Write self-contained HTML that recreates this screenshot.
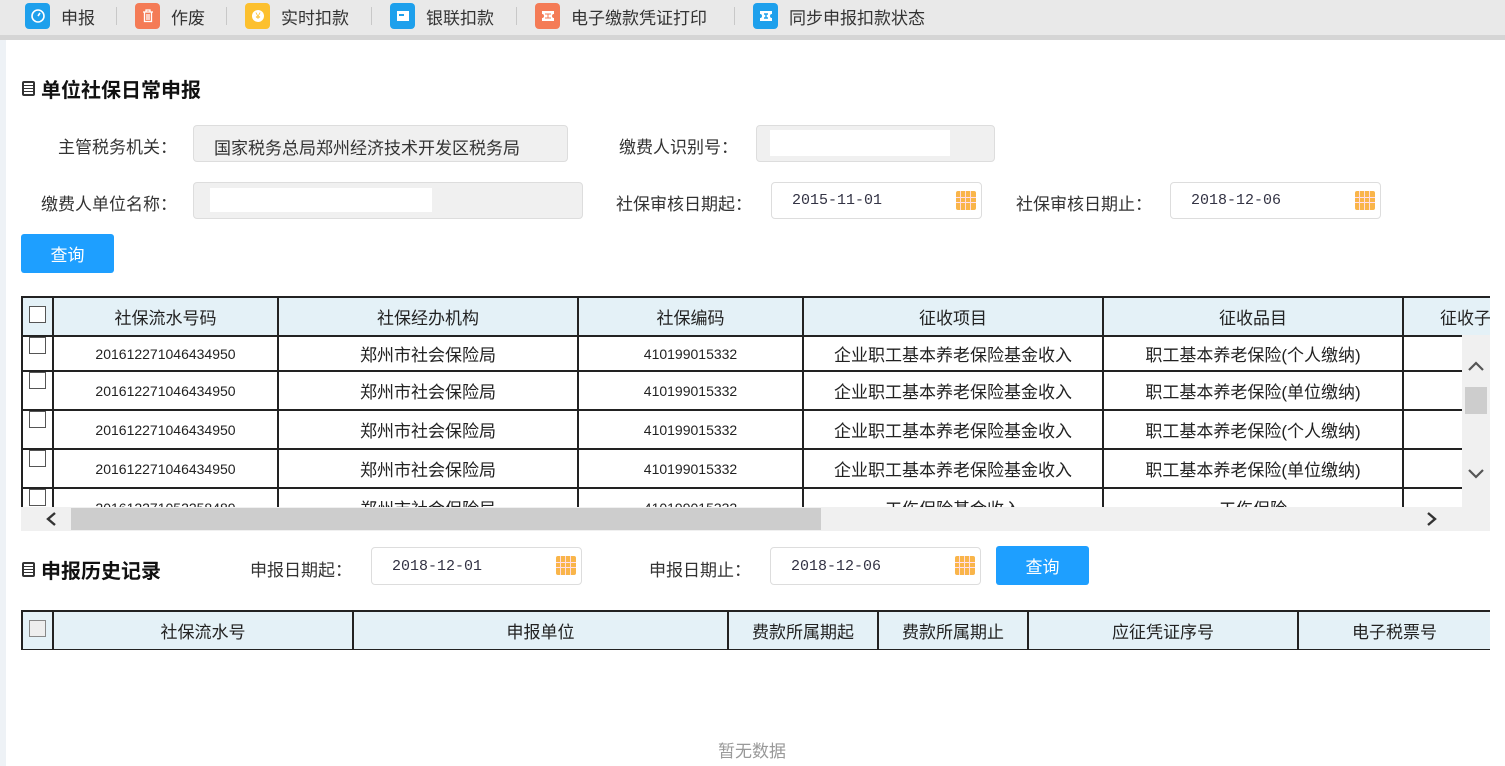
<!DOCTYPE html>
<html><head><meta charset="utf-8"><style>
*{box-sizing:border-box;margin:0;padding:0}
body{width:1505px;height:766px;overflow:hidden;background:#fff;font-family:"Liberation Sans","Noto Sans CJK SC",sans-serif;color:#333;position:relative}
.a{position:absolute}
.tb{left:0;top:0;width:1505px;height:35px;background:#e9e9e9}
.tb2{left:0;top:35px;width:1505px;height:5px;background:#d5d5d5}
.ti{position:absolute;top:3px;height:26px;display:flex;align-items:center;font-size:17px;color:#333}
.ic{width:25px;height:26px;border-radius:4px;margin-right:11px;display:flex;align-items:center;justify-content:center}
.sep{position:absolute;top:7px;width:1px;height:18px;background:#c8c8c8}
.lstrip{left:0;top:40px;width:6px;height:726px;background:#eef2f6}
.h{font-size:20px;font-weight:bold;color:#111;display:flex;align-items:center}
.hi{width:13px;height:15px;border:2px solid #333;border-radius:2px;margin-right:6px;background:repeating-linear-gradient(#fff 0 2px,#333 2px 3px)}
.lb{font-size:17px;color:#333;text-align:right}
.in{border:1px solid #ddd;border-radius:4px;background:#f0f0f0}
.dt{border:1px solid #ddd;border-radius:4px;background:#fff;font-family:"Liberation Mono",monospace;font-size:15px;color:#334;padding-left:20px;display:flex;align-items:center}
.cal{position:absolute;right:5px;top:8px;width:20px;height:19px;border-radius:2px;background:#f9b54a;background-image:linear-gradient(90deg,transparent 4px,#fdd 4px 5px,transparent 5px 9px,#fdd 9px 10px,transparent 10px 14px,#fdd 14px 15px,transparent 15px),linear-gradient(transparent 6px,#fde 6px 7px,transparent 7px 11px,#fde 11px 12px,transparent 12px)}
.btn{background:#1e9fff;color:#fff;border-radius:3px;font-size:17px;display:flex;align-items:center;justify-content:center}
table{border-collapse:collapse;table-layout:fixed}
td,th{border:2px solid #222;text-align:center;font-weight:normal;font-size:17px;color:#222;white-space:nowrap;overflow:hidden}
th{background:#e4f1f7}
.num{font-size:14px;color:#222}
.cb{display:inline-block;width:17px;height:17px;border:1px solid #555;background:#fff}
</style></head><body>
<div class="a tb"></div><div class="a tb2"></div>
<div class="ti" style="left:25px"><div class="ic" style="background:#1ea0ec"><svg width="16" height="16"><circle cx="8" cy="8" r="6" fill="none" stroke="#fff" stroke-width="1.6"/><path d="M8 8L10 5" stroke="#fff" stroke-width="1.6"/></svg></div>申报</div>
<div class="sep" style="left:116px"></div>
<div class="ti" style="left:135px"><div class="ic" style="background:#f47b56"><svg width="12" height="14"><path d="M1 3h10M4 3V1h4v2M2.5 3.5v9h7v-9M5 5v6M7 5v6" fill="none" stroke="#fff" stroke-width="1.3"/></svg></div>作废</div>
<div class="sep" style="left:226px"></div>
<div class="ti" style="left:245px"><div class="ic" style="background:#fcc02e"><svg width="16" height="16"><circle cx="8" cy="8" r="6" fill="#fff"/><text x="8" y="11" font-size="9" text-anchor="middle" fill="#fcc02e">¥</text></svg></div>实时扣款</div>
<div class="sep" style="left:371px"></div>
<div class="ti" style="left:390px"><div class="ic" style="background:#1ea0ec"><svg width="14" height="12"><rect x="1" y="1" width="12" height="10" fill="#fff"/><rect x="3" y="4" width="5" height="2" fill="#1ea0ec"/></svg></div>银联扣款</div>
<div class="sep" style="left:516px"></div>
<div class="ti" style="left:535px"><div class="ic" style="background:#f47b56"><svg width="14" height="12"><path d="M1 1h12v3a2 2 0 0 0 0 4v3H1V8a2 2 0 0 0 0-4z" fill="#fff"/><path d="M4 4h6M4 8h6M7 4v4" stroke="#f47b56"/></svg></div>电子缴款凭证打印</div>
<div class="sep" style="left:734px"></div>
<div class="ti" style="left:753px"><div class="ic" style="background:#1ea0ec"><svg width="14" height="12"><path d="M1 1h12v3a2 2 0 0 0 0 4v3H1V8a2 2 0 0 0 0-4z" fill="#fff"/><path d="M5 4h4M5 8h4M7 4v4" stroke="#1ea0ec" stroke-width="1.4"/></svg></div>同步申报扣款状态</div>
<div class="a lstrip"></div>

<div class="a h" style="left:22px;top:74px"><div class="hi"></div>单位社保日常申报</div>

<div class="a lb" style="left:0;width:177px;top:133px">主管税务机关：</div>
<div class="a in" style="left:193px;top:125px;width:375px;height:37px;font-size:17px;padding:8px 0 0 20px;color:#333">国家税务总局郑州经济技术开发区税务局</div>
<div class="a lb" style="left:560px;width:178px;top:133px">缴费人识别号：</div>
<div class="a in" style="left:756px;top:125px;width:239px;height:37px"></div>
<div class="a" style="left:770px;top:130px;width:180px;height:26px;background:#fff"></div>

<div class="a lb" style="left:0;width:177px;top:190px">缴费人单位名称：</div>
<div class="a in" style="left:193px;top:182px;width:390px;height:37px"></div>
<div class="a" style="left:210px;top:188px;width:222px;height:24px;background:#fff"></div>
<div class="a lb" style="left:560px;width:192px;top:190px">社保审核日期起：</div>
<div class="a dt" style="left:771px;top:182px;width:211px;height:37px">2015-11-01<div class="cal"></div></div>
<div class="a lb" style="left:960px;width:192px;top:190px">社保审核日期止：</div>
<div class="a dt" style="left:1170px;top:182px;width:211px;height:37px">2018-12-06<div class="cal"></div></div>

<div class="a btn" style="left:21px;top:234px;width:93px;height:39px">查询</div>

<div class="a" style="left:21px;top:296px;width:1469px;height:211px;overflow:hidden">
<table style="width:1600px">
<colgroup><col style="width:31px"><col style="width:225px"><col style="width:300px"><col style="width:225px"><col style="width:300px"><col style="width:300px"><col style="width:219px"></colgroup>
<tr style="height:39px"><th><span class="cb"></span></th><th>社保流水号码</th><th>社保经办机构</th><th>社保编码</th><th>征收项目</th><th>征收品目</th><th style="text-align:left;padding-left:36px">征收子目</th></tr>
<tr style="height:35px"><td style="vertical-align:top"><span class="cb"></span></td><td class="num">201612271046434950</td><td>郑州市社会保险局</td><td class="num">410199015332</td><td>企业职工基本养老保险基金收入</td><td>职工基本养老保险(个人缴纳)</td><td></td></tr>
<tr style="height:39px"><td style="vertical-align:top"><span class="cb"></span></td><td class="num">201612271046434950</td><td>郑州市社会保险局</td><td class="num">410199015332</td><td>企业职工基本养老保险基金收入</td><td>职工基本养老保险(单位缴纳)</td><td></td></tr>
<tr style="height:39px"><td style="vertical-align:top"><span class="cb"></span></td><td class="num">201612271046434950</td><td>郑州市社会保险局</td><td class="num">410199015332</td><td>企业职工基本养老保险基金收入</td><td>职工基本养老保险(个人缴纳)</td><td></td></tr>
<tr style="height:39px"><td style="vertical-align:top"><span class="cb"></span></td><td class="num">201612271046434950</td><td>郑州市社会保险局</td><td class="num">410199015332</td><td>企业职工基本养老保险基金收入</td><td>职工基本养老保险(单位缴纳)</td><td></td></tr>
<tr style="height:39px"><td style="vertical-align:top"><span class="cb"></span></td><td class="num">201612271052258489</td><td>郑州市社会保险局</td><td class="num">410199015332</td><td>工伤保险基金收入</td><td>工伤保险</td><td></td></tr>
</table></div>
<div class="a" style="left:1462px;top:335px;width:28px;height:172px;background:#f0f0f0"></div>
<div class="a" style="left:1465px;top:387px;width:22px;height:27px;background:#cdcdcd"></div>
<svg class="a" style="left:1467px;top:360px" width="18" height="12"><path d="M2 10L9 3L16 10" fill="none" stroke="#555" stroke-width="2.2"/></svg>
<svg class="a" style="left:1467px;top:468px" width="18" height="12"><path d="M2 2L9 9L16 2" fill="none" stroke="#555" stroke-width="2.2"/></svg>
<div class="a" style="left:21px;top:507px;width:1469px;height:24px;background:#f0f0f0"></div>
<div class="a" style="left:71px;top:508px;width:750px;height:22px;background:#cdcdcd"></div>
<svg class="a" style="left:44px;top:511px" width="14" height="16"><path d="M11 2L4 8L11 14" fill="none" stroke="#333" stroke-width="2.4"/></svg>
<svg class="a" style="left:1425px;top:511px" width="14" height="16"><path d="M3 2L10 8L3 14" fill="none" stroke="#333" stroke-width="2.4"/></svg>

<div class="a h" style="left:22px;top:555px"><div class="hi"></div>申报历史记录</div>
<div class="a lb" style="left:200px;width:152px;top:556px">申报日期起：</div>
<div class="a dt" style="left:371px;top:547px;width:211px;height:38px">2018-12-01<div class="cal"></div></div>
<div class="a lb" style="left:600px;width:151px;top:556px">申报日期止：</div>
<div class="a dt" style="left:770px;top:547px;width:211px;height:38px">2018-12-06<div class="cal"></div></div>
<div class="a btn" style="left:996px;top:546px;width:93px;height:39px">查询</div>

<div class="a" style="left:21px;top:610px;width:1469px;height:40px;overflow:hidden">
<table style="width:1500px">
<colgroup><col style="width:31px"><col style="width:300px"><col style="width:375px"><col style="width:150px"><col style="width:150px"><col style="width:270px"><col style="width:224px"></colgroup>
<tr style="height:39px"><th><span class="cb" style="background:#eee;border-color:#888"></span></th><th>社保流水号</th><th>申报单位</th><th>费款所属期起</th><th>费款所属期止</th><th>应征凭证序号</th><th style="text-align:left;padding-left:53px">电子税票号</th></tr>
</table></div>
<div class="a" style="left:718px;top:737px;font-size:17px;color:#999">暂无数据</div>
</body></html>
